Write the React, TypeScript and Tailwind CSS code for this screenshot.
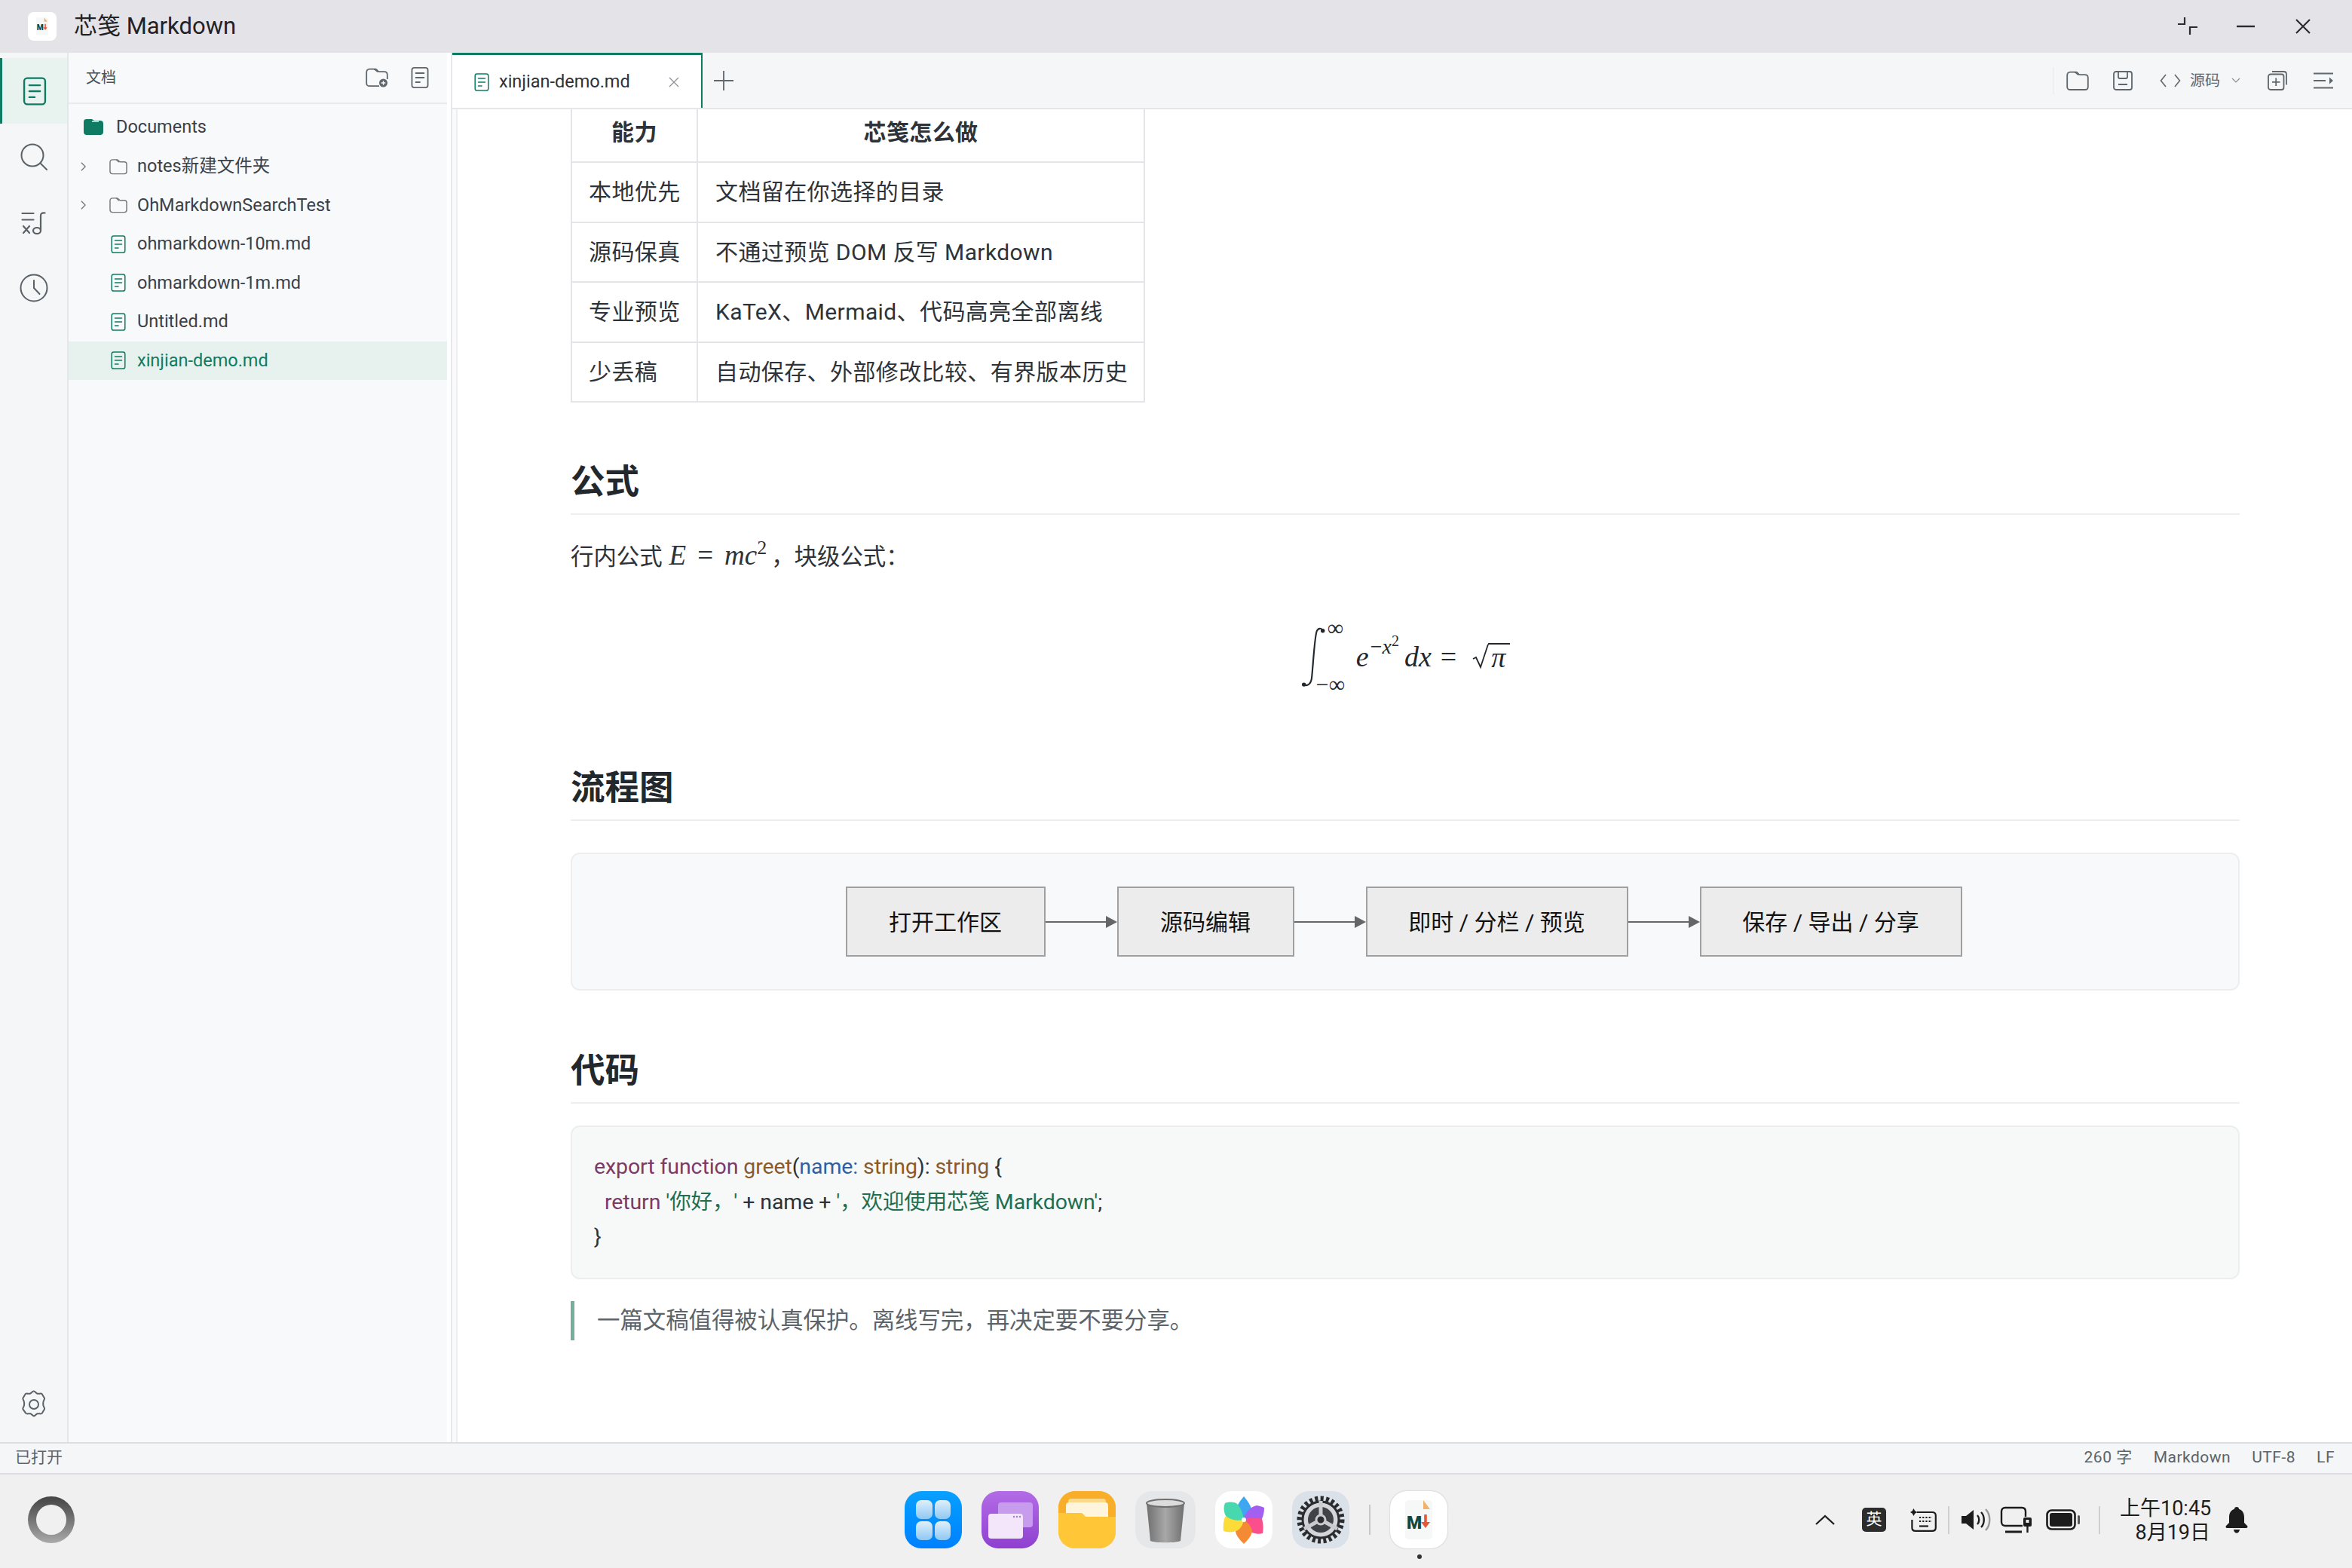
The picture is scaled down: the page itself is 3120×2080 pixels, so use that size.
import type { ReactNode } from "react";

const sans = "font-['Roboto','Noto_Sans_CJK_SC',sans-serif]";

function FileIcon({ className = "" }: { className?: string }) {
  return (
    <svg viewBox="0 0 20 24" fill="none" stroke="currentColor" strokeWidth="1.5" strokeLinecap="round" className={className}>
      <rect x="1.2" y="1" width="17.6" height="22" rx="2.6" />
      <path d="M5.5 7h9M5.5 12h9M5.500 17h4.500" />
    </svg>
  );
}

function FolderOutline({ className = "" }: { className?: string }) {
  return (
    <svg viewBox="0 0 30 26" fill="none" stroke="currentColor" strokeWidth="1.8" strokeLinejoin="round" className={className}>
      <path d="M1.2 6c0-2.4 1.4-4.4 4-4.4h8c2 0 2.6 3.6 5 3.6h6.5c2.6 0 4.1 1.8 4.1 4.2v11.8c0 2.4-1.6 3.8-4 3.8H5.2c-2.4 0-4-1.4-4-3.8z" />
      <path d="M11 1.8c2.6 0 3 3.4 5.6 3.4" />
    </svg>
  );
}

function SideRow({ icon, label, pad, chevron, active }: { icon: ReactNode; label: string; pad: string; chevron?: boolean; active?: boolean }) {
  return (
    <div className={`flex h-[51.5px] items-center ${pad} text-[23.5px] ${active ? "bg-[#e7f2ee] text-[#0f7b62]" : "text-[#3a4148]"}`}>
      {chevron && (
        <svg viewBox="0 0 8 14" fill="none" stroke="#6b7278" strokeWidth="1.4" className="mr-[31px] h-[14px] w-[7px]">
          <path d="M1 1l6 6-6 6" />
        </svg>
      )}
      {icon}
      <span className="ml-[13px]">{label}</span>
    </div>
  );
}

function Sidebar() {
  const doc = <FileIcon className="mx-[2px] h-[24px] w-[20px] text-[#0f7b62]" />;
  const folder = <FolderOutline className="h-[22px] w-[24px] text-[#71777d]" />;
  return (
    <aside className="flex w-[502px] shrink-0 flex-col bg-[#f8f9fb]">
      <div className="flex h-[68px] shrink-0 items-center justify-between border-b-2 border-[#e8eaed] pr-[24px] pl-[23px]">
        <span className="text-[20px] text-[#4a5157]">文档</span>
        <div className="flex items-center gap-[30px] text-[#5f666c]">
          <svg viewBox="0 0 30 26" fill="none" stroke="currentColor" strokeWidth="1.8" strokeLinejoin="round" className="h-[26px] w-[30px]">
            <path d="M18 24.2H5.2c-2.4 0-4-1.4-4-3.8V6c0-2.4 1.4-4.4 4-4.4h8c2 0 2.6 3.6 5 3.6h6.5c2.6 0 4.1 1.8 4.1 4.2V15" />
            <path d="M11 1.8c2.6 0 3 3.4 5.6 3.4" />
            <circle cx="23.5" cy="20" r="5.5" fill="currentColor" stroke="none" />
            <path d="M23.5 17.2v5.6M20.7 20h5.6" stroke="#f8f9fb" strokeWidth="1.4" />
          </svg>
          <FileIcon className="h-[30px] w-[24px]" />
        </div>
      </div>
      <div className="flex h-[57px] items-center pt-[4px] pl-[20px] text-[23.5px] text-[#3a4148]">
        <svg viewBox="0 0 26 21" className="h-[21px] w-[26px]" fill="#0f7b62">
          <path d="M0 4c0-2.4 1.2-4 3.6-4h6.6c2.2 0 2.4 2 4.4 2H22c2.6 0 4 1.6 4 4v11c0 2.4-1.6 4-4 4H4c-2.400 0-4-1.600-4-4z" />
          <path d="M11 3.2h9" stroke="#dff0ea" strokeWidth="1.4" />
        </svg>
        <span className="ml-[17px]">Documents</span>
      </div>
      <SideRow pad="pl-[16px]" chevron icon={folder} label="notes新建文件夹" />
      <SideRow pad="pl-[16px]" chevron icon={folder} label="OhMarkdownSearchTest" />
      <SideRow pad="pl-[54px]" icon={doc} label="ohmarkdown-10m.md" />
      <SideRow pad="pl-[54px]" icon={doc} label="ohmarkdown-1m.md" />
      <SideRow pad="pl-[54px]" icon={doc} label="Untitled.md" />
      <SideRow pad="pl-[54px]" active icon={doc} label="xinjian-demo.md" />
    </aside>
  );
}

function ActivityBar() {
  return (
    <nav className="flex w-[91px] shrink-0 flex-col border-r-2 border-[#e4e6e9] bg-[#f4f6f8] pt-[7px] text-[#5a6167]">
      <div className="flex h-[87px] items-center justify-center border-l-[3px] border-[#0f7b62] bg-[#e8f3ef] pr-[1px]">
        <FileIcon className="h-[38px] w-[32px] text-[#0f7b62]" />
      </div>
      <div className="flex h-[87px] items-center justify-center">
        <svg viewBox="0 0 36 36" fill="none" stroke="currentColor" strokeWidth="2" strokeLinecap="round" className="h-[36px] w-[36px]">
          <circle cx="16" cy="16" r="14.5" />
          <path d="M27 27l8 8" />
        </svg>
      </div>
      <div className="flex h-[87px] items-center justify-center pt-[3px]">
        <svg viewBox="0 0 34 30" fill="none" stroke="currentColor" strokeWidth="2.2" strokeLinecap="round" className="h-[30px] w-[34px]">
          <path d="M1.500 2h15M1.500 10.500h15M3 19l8 9M11 19l-8 9" />
          <path d="M26 24.500V5c0-2.500 1.500-4 5.500-3.500" />
          <ellipse cx="21" cy="25" rx="5" ry="4" />
        </svg>
      </div>
      <div className="flex h-[87px] items-center justify-center">
        <svg viewBox="0 0 38 38" fill="none" stroke="currentColor" strokeWidth="2" strokeLinecap="round" className="h-[38px] w-[38px]">
          <circle cx="19" cy="19" r="17.5" />
          <path d="M19 9v10l7.500 8" />
        </svg>
      </div>
      <div className="mt-auto flex h-[100px] items-center justify-center">
        <svg viewBox="0 0 36 38" fill="none" stroke="currentColor" strokeWidth="2" strokeLinejoin="round" className="h-[38px] w-[36px]">
          <path d="M18 1.500c1.600 0 2.600 2.600 4.600 3.200 2.400.7 4.600-1 6 .4l3.400 5.600c.6 1.600-1.400 3-1.600 5.200-.2 1.400-.2 3 0 4.200.3 2.200 2.200 3.400 1.600 5.200l-3.400 5.600c-1.400 1.400-3.600-.3-6 .4-2 .6-3 3.200-4.600 3.200s-2.600-2.600-4.600-3.200c-2.400-.7-4.600 1-6-.4L3.400 25.300c-.6-1.800 1.300-3 1.600-5.200.2-1.200.2-2.800 0-4.200-.2-2.200-2.200-3.600-1.600-5.200l3.400-5.600c1.400-1.400 3.600.3 6-.4 2-.6 3-3.200 4.600-3.200z" />
          <circle cx="18" cy="19" r="6" />
        </svg>
      </div>
    </nav>
  );
}

function TabBar() {
  return (
    <div className="flex h-[75px] shrink-0 items-stretch border-b-2 border-[#e4e6e9] bg-[#f4f6f8]">
      <div className="flex w-[332px] items-center border-t-[3px] border-r-2 border-[#0f7b62] bg-white pt-[1px] pl-[29px] text-[23.5px] text-[#2d3339]">
        <FileIcon className="h-[24px] w-[20px] text-[#0f7b62]" />
        <span className="ml-[13px]">xinjian-demo.md</span>
        <svg viewBox="0 0 14 14" fill="none" stroke="#8a9096" strokeWidth="1.2" className="mr-[29px] ml-auto h-[14px] w-[14px]">
          <path d="M1 1l12 12M13 1L1 13" />
        </svg>
      </div>
      <div className="flex w-[56px] items-center justify-center">
        <svg viewBox="0 0 26 26" fill="none" stroke="#5f666c" strokeWidth="1.8" className="h-[26px] w-[26px]">
          <path d="M13 0v26M0 13h26" />
        </svg>
      </div>
      <div className="ml-auto flex items-center text-[#5f666c]">
        <div className="mr-[17px] h-[36px] w-px bg-[#e6e8eb]" />
        <FolderOutline className="h-[26px] w-[30px]" />
        <svg viewBox="0 0 26 26" fill="none" stroke="currentColor" strokeWidth="1.8" strokeLinejoin="round" className="ml-[32px] h-[26px] w-[26px]">
          <rect x="1" y="1" width="24" height="24" rx="3" />
          <path d="M7 1v7c0 1 .8 2 2 2h8c1.200 0 2-1 2-2V1M7 18h12" />
        </svg>
        <svg viewBox="0 0 28 20" fill="none" stroke="currentColor" strokeWidth="1.6" className="ml-[36px] h-[20px] w-[28px]">
          <path d="M8 2L1.500 10 8 18M20 2l6.500 8-6.500 8" />
        </svg>
        <span className="ml-[12px] text-[20px]">源码</span>
        <svg viewBox="0 0 12 7" fill="none" stroke="#8a9096" strokeWidth="1.2" className="ml-[15px] h-[7px] w-[12px]">
          <path d="M1 1l5 5 5-5" />
        </svg>
        <svg viewBox="0 0 26 26" fill="none" stroke="currentColor" strokeWidth="1.8" strokeLinejoin="round" className="ml-[36px] h-[26px] w-[26px]">
          <rect x="1" y="4.500" width="20.500" height="20.500" rx="3" />
          <path d="M6 1h15.500c2 0 3.500 1.500 3.500 3.500v14M11.200 9.500v10.500M6 14.800h10.500" />
        </svg>
        <svg viewBox="0 0 26 22" fill="none" stroke="currentColor" strokeWidth="1.8" className="mr-[25px] ml-[35px] h-[22px] w-[26px]">
          <path d="M0 1.500h26M0 11h16M0 20.500h26" />
          <path d="M21 6.500l5 4.500-5 4.500z" fill="currentColor" stroke="none" />
        </svg>
      </div>
    </div>
  );
}

function Heading({ children, className = "" }: { children: ReactNode; className?: string }) {
  return <h2 className={`border-b-2 border-[#eceef0] pb-[13px] text-[45.5px] leading-[56px] font-bold text-[#23282d] ${className}`}>{children}</h2>;
}

const rows = [
  ["本地优先", "文档留在你选择的目录"],
  ["源码保真", "不通过预览 DOM 反写 Markdown"],
  ["专业预览", "KaTeX、Mermaid、代码高亮全部离线"],
  ["少丢稿", "自动保存、外部修改比较、有界版本历史"],
];

function Capabilities() {
  return (
    <table className="mt-[-10px] w-[762px] table-fixed border-collapse text-[30px] tracking-[0.4px] text-[#2d3339]">
      <colgroup>
        <col className="w-[167px]" />
        <col />
      </colgroup>
      <thead>
        <tr className="h-[80px]">
          <th className="border-2 border-t-0 border-[#e3e5e8] pt-[2px] text-center font-bold">能力</th>
          <th className="border-2 border-t-0 border-[#e3e5e8] pt-[2px] text-center font-bold">芯笺怎么做</th>
        </tr>
      </thead>
      <tbody>
        {rows.map(([a, b]) => (
          <tr key={a} className="h-[79.5px]">
            <td className="border-2 border-[#e3e5e8] pl-[22px]">{a}</td>
            <td className="border-2 border-[#e3e5e8] pl-[23px] whitespace-nowrap">{b}</td>
          </tr>
        ))}
      </tbody>
    </table>
  );
}

const mathFont = "font-['Liberation_Serif',serif]";

function BlockFormula() {
  return (
    <div className={`mt-[66px] flex h-[90px] items-center justify-center text-[38px] text-[#23282d] italic ${mathFont}`}>
      <svg viewBox="0 0 34 84" className="mt-[-6px] h-[82px] w-[34px]" fill="none" stroke="currentColor" strokeLinecap="round">
        <path d="M30 5c-2-3-6-3-8 1-3 6-5 45-7 64-1 8-6 12-11 9" strokeWidth="2.2" />
        <circle cx="30" cy="6" r="2.800" fill="currentColor" stroke="none" />
        <circle cx="4.400" cy="79" r="2.800" fill="currentColor" stroke="none" />
      </svg>
      <div className="mt-[-9px] flex h-[105px] w-[40px] flex-col justify-between leading-[30px] not-italic">
        <span className="ml-[2px] h-[30px] text-[30px]">∞</span>
        <span className="ml-[-13px] h-[30px] text-[30px] whitespace-nowrap">−∞</span>
      </div>
      <span className="mt-[-8px]">e</span>
      <span className="mt-[-34px] ml-[2px] flex items-baseline text-[28px] whitespace-nowrap">
        <span className="not-italic">−</span>
        <span>x</span>
        <span className="relative top-[-10px] text-[20px] not-italic">2</span>
      </span>
      <span className="mt-[-8px] ml-[7px]">dx</span>
      <span className="mt-[-8px] ml-[12px] not-italic">=</span>
      <svg viewBox="0 0 24 34" className="mt-[-8px] ml-[21px] h-[36px] w-[24px]" fill="none" stroke="currentColor">
        <path d="M1 20l4-2 6 13L21 .8" strokeWidth="1.8" />
      </svg>
      <span className="mt-[-8px] ml-[-3px] border-t-2 border-[#23282d] pr-[6px] pl-[4px] text-[38px] leading-[34px]">π</span>
    </div>
  );
}

function FlowBox({ label, width, gap }: { label: string; width: string; gap?: boolean }) {
  return (
    <>
      {gap && (
        <svg viewBox="0 0 95 16" className="h-[16px] w-[95px]">
          <path d="M0 8h82" stroke="#666" strokeWidth="2" />
          <path d="M80 0l15 8-15 8z" fill="#666" />
        </svg>
      )}
      <div className={`flex h-[93px] items-center justify-center border-2 border-[#a0a0a0] bg-[#ececec] pt-[2px] text-[30px] text-[#111] ${width}`}>{label}</div>
    </>
  );
}

function FlowChart() {
  return (
    <div className="mt-[42px] flex h-[183px] items-center justify-center rounded-[12px] border-2 border-[#eceef0] bg-[#f8f9fa] pr-[4px]">
      <FlowBox label="打开工作区" width="w-[265px]" />
      <FlowBox gap label="源码编辑" width="w-[235px]" />
      <FlowBox gap label="即时 / 分栏 / 预览" width="w-[348px]" />
      <FlowBox gap label="保存 / 导出 / 分享" width="w-[348px]" />
    </div>
  );
}

const keyword = "text-[#7d3a68]";
const type = "text-[#8a5a2b]";
const param = "text-[#2f5f9f]";
const str = "text-[#1f6f4f]";

const codeLines: { text: string; color?: string }[][] = [
  [
    { text: "export function ", color: keyword },
    { text: "greet", color: type },
    { text: "(" },
    { text: "name: ", color: param },
    { text: "string", color: type },
    { text: "): " },
    { text: "string", color: type },
    { text: " {" },
  ],
  [
    { text: "  " },
    { text: "return ", color: keyword },
    { text: "'你好，'", color: str },
    { text: " + name + " },
    { text: "'，欢迎使用芯笺 Markdown'", color: str },
    { text: ";" },
  ],
  [{ text: "}" }],
];

function CodeBlock() {
  return (
    <div className="mt-[29px] h-[204px] rounded-[12px] border-2 border-[#eceef0] bg-[#f7f8f8] pt-[30px] pl-[29px] text-[28.5px] leading-[46.5px] tracking-[-0.1px] whitespace-pre text-[#2d3339]">
      {codeLines.map((line, i) => (
        <div key={i}>
          {line.map((t, j) => (
            <span key={j} className={t.color}>
              {t.text}
            </span>
          ))}
        </div>
      ))}
    </div>
  );
}

function Editor() {
  return (
    <div className="ml-[5px] min-h-0 flex-1 overflow-hidden border-l-2 border-[#eceef0] bg-white pr-[149px] pl-[150px]">
      <Capabilities />
      <Heading className="mt-[78px]">公式</Heading>
      <p className="mt-[31px] flex items-baseline text-[30.4px] leading-[46px] text-[#2d3339]">
        <span>行内公式</span>
        <span className={`ml-[9px] text-[37px] italic ${mathFont}`}>E</span>
        <span className={`mx-[15px] text-[37px] ${mathFont}`}>=</span>
        <span className={`text-[37px] italic ${mathFont}`}>mc</span>
        <span className={`relative top-[-14px] text-[26px] ${mathFont}`}>2</span>
        <span className="ml-[6px]">，块级公式：</span>
      </p>
      <BlockFormula />
      <Heading className="mt-[98px]">流程图</Heading>
      <FlowChart />
      <Heading className="mt-[79px]">代码</Heading>
      <CodeBlock />
      <blockquote className="mt-[29px] flex h-[52px] items-center border-l-[5px] border-[#76ad9d] pl-[30px] text-[30.4px] text-[#5c6369]">
        一篇文稿值得被认真保护。离线写完，再决定要不要分享。
      </blockquote>
    </div>
  );
}

function AppTile({ children, className = "" }: { children: ReactNode; className?: string }) {
  return <div className={`h-[76px] w-[76px] shrink-0 overflow-hidden rounded-[22px] ${className}`}>{children}</div>;
}

function MdMark({ className = "" }: { className?: string }) {
  return (
    <svg viewBox="0 0 76 76" className={className}>
      <rect x="20" y="12" width="36" height="52" rx="5" fill="#f6f8f7" />
      <path d="M44 12l9 12h-9z" fill="#f0b26c" />
      <text x="22" y="50" fontFamily="Roboto, sans-serif" fontWeight="900" fontSize="23" fill="#12473c">M</text>
      <path d="M47 31v12" stroke="#e4583a" strokeWidth="3.6" />
      <path d="M41 41h12l-6 8z" fill="#e4583a" />
    </svg>
  );
}

function Dock() {
  return (
    <div className="flex items-center gap-[26px]">
      <AppTile className="bg-gradient-to-b from-[#0aa0ff] to-[#0080ff]">
        <div className="grid h-full grid-cols-2 content-center justify-center gap-[3px] px-[15px]">
          <div className="h-[25px] rounded-[7px] bg-gradient-to-b from-[#dfeffa] to-[#8fc8f4]" />
          <div className="h-[25px] rounded-[7px] bg-gradient-to-b from-[#dfeffa] to-[#8fc8f4]" />
          <div className="h-[25px] rounded-[7px] bg-gradient-to-b from-[#dfeffa] to-[#8fc8f4]" />
          <div className="h-[25px] rounded-[7px] bg-gradient-to-b from-[#dfeffa] to-[#8fc8f4]" />
        </div>
      </AppTile>
      <AppTile className="bg-gradient-to-b from-[#b36ce6] to-[#8f3fd0]">
        <svg viewBox="0 0 76 76" className="h-full w-full">
          <rect x="22" y="15" width="46" height="33" rx="4" fill="#c89cec" />
          <rect x="9" y="30" width="46" height="33" rx="4" fill="#f3e6fb" />
          <circle cx="43" cy="34" r="1.200" fill="#a77cd0" />
          <circle cx="47" cy="34" r="1.200" fill="#a77cd0" />
          <circle cx="51" cy="34" r="1.200" fill="#a77cd0" />
        </svg>
      </AppTile>
      <AppTile className="bg-gradient-to-b from-[#fbbf36] to-[#ffc738]">
        <svg viewBox="0 0 76 76" className="h-full w-full">
          <rect x="0" y="0" width="76" height="38" fill="#f9ae2a" />
          <rect x="13" y="10" width="50" height="30" rx="4" fill="#fcd98a" />
          <rect x="10" y="15" width="56" height="30" rx="4" fill="#fff4dc" />
          <path d="M0 29h30c3 0 4 5 8 5h38v42H0z" fill="#ffc738" />
        </svg>
      </AppTile>
      <AppTile className="w-[80px] bg-[#e6e7e8]">
        <svg viewBox="0 0 80 76" className="h-full w-full">
          <defs>
            <linearGradient id="cup" x1="0" x2="1">
              <stop offset="0" stopColor="#6f6f6f" />
              <stop offset="0.5" stopColor="#a8a8a8" />
              <stop offset="1" stopColor="#6f6f6f" />
            </linearGradient>
          </defs>
          <path d="M15 16h50l-5 50c-6 3-34 3-40 0z" fill="url(#cup)" />
          <ellipse cx="40" cy="16" rx="25" ry="5" fill="#dcdcdc" stroke="#6f6f6f" strokeWidth="2" />
        </svg>
      </AppTile>
      <AppTile className="bg-white">
        <svg viewBox="0 0 76 76" className="h-full w-full">
          <path d="M38 7c6 7 11 14 10 22-2 5-6 7-10 9-4-2-8-4-10-9-1-8 4-15 10-22z" fill="#3fa6f2" />
          <path d="M55 19c5 1 8 2 10 3 0 8-2 16-8 21-5 2-12 0-19-5 1-8 6-16 17-19z" fill="#a35ff0" />
          <path d="M38 38c7-3 16-3 24-1 2 7 2 13 1 19-7 2-15 0-19-5-3-4-5-8-6-13z" fill="#fa4f8c" />
          <path d="M38 38c5 3 9 8 11 14 0 7-6 13-11 18-5-5-11-11-11-18 0-6 5-11 11-14z" fill="#f58a35" />
          <path d="M38 38c-1 6-4 11-8 14-6 3-13 3-19 1-1-6 0-13 2-19 8-2 18-1 25 4z" fill="#fbdc38" />
          <path d="M38 38C30 40 20 38 14 33c-3-6-3-12-1-17 4-2 10-2 15 0 5 4 9 13 10 22z" fill="#47d8b0" />
          <circle cx="38" cy="38" r="3" fill="#fff" />
        </svg>
      </AppTile>
      <AppTile className="bg-[#dbe1e8]">
        <svg viewBox="0 0 76 76" className="h-full w-full">
          <circle cx="38" cy="38" r="27" fill="#d3d5d8" />
          <circle cx="38" cy="38" r="28" fill="none" stroke="#2a2c2f" strokeWidth="7" strokeDasharray="4 3.300" />
          <circle cx="38" cy="38" r="24" fill="none" stroke="#2a2c2f" strokeWidth="3" />
          <circle cx="38" cy="38" r="17" fill="#3f4247" />
          <path d="M38 38V13M38 38L16 50M38 38l22 12" stroke="#c9cbce" strokeWidth="5" />
          <circle cx="38" cy="38" r="6" fill="#2a2c2f" stroke="#c9cbce" strokeWidth="3" />
        </svg>
      </AppTile>
      <div className="h-[40px] w-[2px] bg-[#c8c8c8]" />
      <div className="relative">
        <AppTile className="bg-white shadow-[0_0_2px_rgba(0,0,0,0.25)]">
          <MdMark className="h-full w-full" />
        </AppTile>
        <div className="absolute top-[84px] left-[36px] h-[6px] w-[6px] rounded-full bg-[#333]" />
      </div>
    </div>
  );
}

function Tray() {
  return (
    <div className="flex items-center justify-end pr-[138px] text-[#1c1c1c]">
      <svg viewBox="0 0 26 14" fill="none" stroke="currentColor" strokeWidth="2.2" className="h-[14px] w-[26px]">
        <path d="M1 13L13 2l12 11" />
      </svg>
      <span className="ml-[36px] flex h-[32px] w-[32px] items-center justify-center rounded-[5px] bg-[#2c2c2c] text-[21px] text-white">英</span>
      <svg viewBox="0 0 35 32" fill="none" stroke="currentColor" strokeWidth="2.2" className="ml-[32px] h-[32px] w-[35px]">
        <path d="M9 6h20c3 0 4.800 1.600 4.800 4.400v16c0 2.800-1.800 4.400-4.800 4.400H7c-3 0-4.600-1.600-4.600-4.400V16" />
        <path d="M4.500 1l1.700 3.300L9.500 6 6.200 7.700 4.500 11 2.800 7.700 0 6l2.800-1.700z" fill="currentColor" stroke="none" />
        <path d="M12 13h17M12 18h17" strokeDasharray="2.200 2" strokeWidth="2" />
        <path d="M12 24.500h12" />
      </svg>
      <div className="ml-[15px] h-[37px] w-[2px] bg-[#cfcfcf]" />
      <svg viewBox="0 0 39 32" className="ml-[16px] h-[32px] w-[39px]" fill="none">
        <path d="M0 11h6l10-8v26l-10-8H0z" fill="currentColor" />
        <path d="M21 10c3 3 3 9 0 12M26 6c5 5 5 15 0 20" stroke="currentColor" strokeWidth="2.4" />
        <path d="M32 2c7 7 7 21 0 28" stroke="#999" strokeWidth="2.4" />
      </svg>
      <svg viewBox="0 0 44 36" fill="none" stroke="currentColor" strokeWidth="2.4" className="ml-[12px] h-[36px] w-[44px]">
        <path d="M30 26H7c-3 0-5-2-5-5V7c0-3 2-5 5-5h22c3 0 5 2 5 5v7" />
        <path d="M7 34h22" strokeWidth="3" />
        <rect x="31" y="15" width="11" height="12" rx="2" fill="currentColor" stroke="none" />
        <rect x="34.500" y="18" width="4" height="4" fill="#f0f0f0" stroke="none" />
        <path d="M36.500 27v8" />
      </svg>
      <svg viewBox="0 0 45 28" className="ml-[17px] h-[28px] w-[45px]" fill="none">
        <rect x="1.500" y="1.500" width="37" height="25" rx="6" stroke="currentColor" strokeWidth="2.600" />
        <rect x="5" y="5" width="30" height="18" rx="3" fill="currentColor" />
        <rect x="42" y="8" width="3" height="12" rx="1.500" fill="#555" />
      </svg>
      <div className="ml-[25px] h-[37px] w-[2px] bg-[#cfcfcf]" />
      <div className="ml-[26px] w-[120px] pt-[2px] text-right text-[27px] leading-[32px] whitespace-nowrap">
        <div>上午10:45</div>
        <div>8月19日</div>
      </div>
      <svg viewBox="0 0 30 36" fill="currentColor" className="ml-[20px] h-[36px] w-[30px]">
        <path d="M15 1c2 0 3 1.300 3 2.800C23 5.500 25 9.500 25 15v7l4 4c1 1 .5 3-1.500 3h-25C.5 29 0 27 1 26l4-4v-7c0-5.500 2-9.500 7-11.200C12 2.300 13 1 15 1z" />
        <path d="M11 31h8c-.5 3-2 4.500-4 4.500s-3.500-1.500-4-4.500z" />
      </svg>
    </div>
  );
}

export default function App() {
  return (
    <div className={`flex h-[2080px] w-[3120px] flex-col overflow-hidden bg-white ${sans}`}>
      <header className="flex h-[70px] shrink-0 items-center bg-[#e4e4e8] pl-[37px]">
        <div className="flex h-[38px] w-[38px] items-center justify-center rounded-[8px] bg-white">
          <MdMark className="h-[34px] w-[34px]" />
        </div>
        <span className="ml-[23px] text-[31px] text-[#1f2226]">芯笺 Markdown</span>
        <div className="ml-auto flex items-center pr-[55px] text-[#2a2c30]">
          <svg viewBox="0 0 26 24" fill="none" stroke="currentColor" strokeWidth="2.2" className="h-[24px] w-[26px]">
            <path d="M0 9h9V0M26 13h-10v10" />
          </svg>
          <svg viewBox="0 0 24 4" fill="none" stroke="currentColor" strokeWidth="2.4" className="ml-[52px] h-[4px] w-[24px]">
            <path d="M0 2h24" />
          </svg>
          <svg viewBox="0 0 20 20" fill="none" stroke="currentColor" strokeWidth="2.2" className="ml-[54px] h-[20px] w-[20px]">
            <path d="M1 1l18 18M19 1L1 19" />
          </svg>
        </div>
      </header>
      <div className="flex min-h-0 flex-1">
        <ActivityBar />
        <Sidebar />
        <main className="ml-[5px] flex min-w-0 flex-1 flex-col border-l-2 border-[#e6e8eb] bg-[#fbfbfc]">
          <TabBar />
          <Editor />
        </main>
      </div>
      <footer className="flex h-[43px] shrink-0 items-center justify-between border-y-2 border-[#dcdee1] bg-[#f4f6f8] pr-[23px] pb-[2px] pl-[20px] text-[21px] text-[#5c6369]">
        <span>已打开</span>
        <div className="flex gap-[28px] tracking-[0.5px]">
          <span>260 字</span>
          <span>Markdown</span>
          <span>UTF-8</span>
          <span>LF</span>
        </div>
      </footer>
      <div className="grid h-[124px] shrink-0 grid-cols-[1fr_auto_1fr] items-center bg-[#f0f0f0] pb-[4px]">
        <div className="pl-[37px]">
          <div className="flex h-[62px] w-[62px] items-center justify-center rounded-full bg-gradient-to-b from-[#444] to-[#aaa]">
            <div className="h-[40px] w-[40px] rounded-full bg-[#f0f0f0]" />
          </div>
        </div>
        <Dock />
        <Tray />
      </div>
    </div>
  );
}
